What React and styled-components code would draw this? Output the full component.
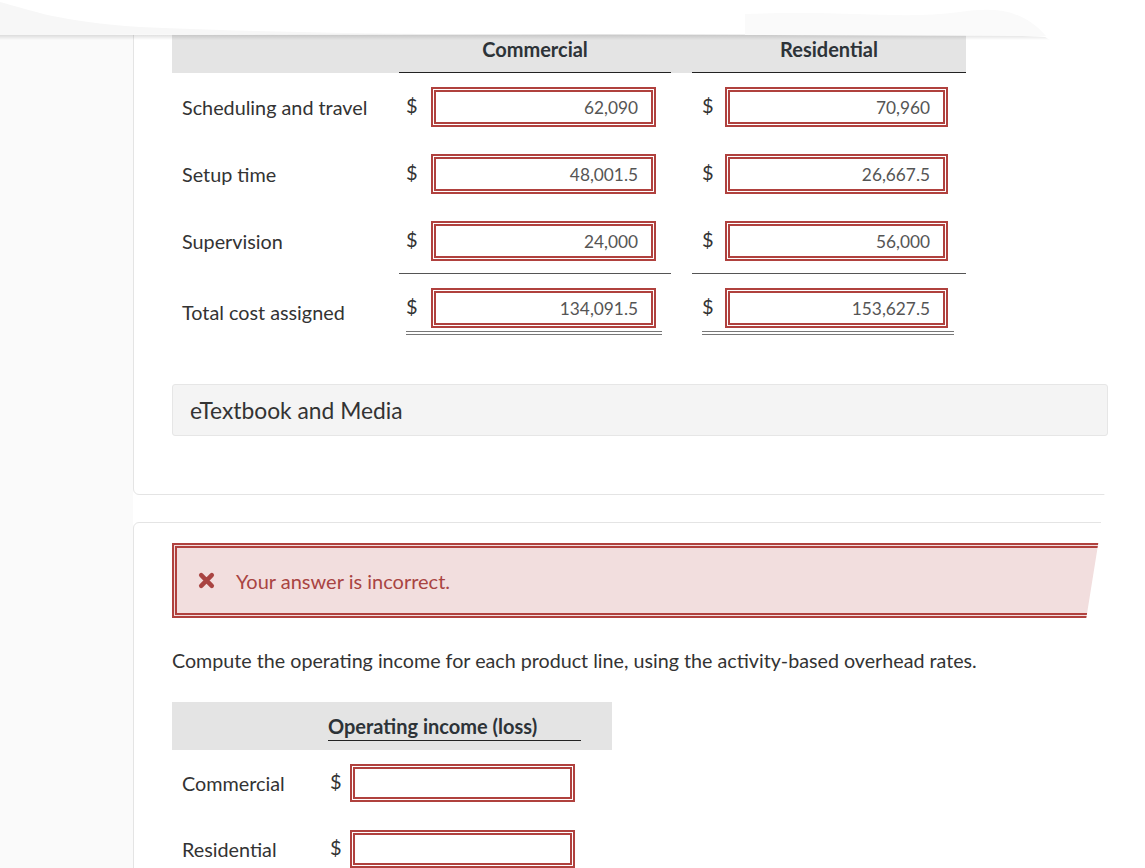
import React from 'react';
import styled, {createGlobalStyle} from 'styled-components';

const GlobalStyle = createGlobalStyle`
    body {
        margin: 0;
        background: #fff;
        font-family: Lato, "Open Sans", "Liberation Sans", sans-serif;
        color: #333;
    }
    * {
        box-sizing: border-box;
    }
`;

const Page = styled.div`
    position: relative;
    display: flex;
    width: 1145px;
    height: 868px;
    overflow: hidden;
`;

const Gutter = styled.div`
    width: 133px;
    flex: none;
    background: #fafafa;
`;

const Main = styled.div`
    flex: 1;
    display: flex;
    flex-direction: column;
    padding-right: 20px;
`;

const Card = styled.section`
    border: 1px solid #e4e4e4;
    border-radius: 6px;
    padding: ${props => props.$top}px 16px ${props => props.$bottom}px 38px;
    margin-top: ${props => props.$gap || 0}px;
    background: #fff;
`;

const Grid = styled.div`
    display: grid;
    grid-template-columns: ${props => props.$cols};
    column-gap: ${props => props.$gap || 0}px;
    width: ${props => props.$width}px;
    margin-top: ${props => props.$mt || 0}px;
    align-items: center;
`;

const HeadRow = styled(Grid)`
    background: #e4e4e4;
    height: 48px;
    align-items: stretch;
`;

const HeadCell = styled.div`
    display: flex;
    align-items: center;
    justify-content: ${props => props.$inset ? 'flex-start' : 'center'};
    font-size: 20px;
    font-weight: 700;
    color: #2d3338;
    border-bottom: ${props => props.$line ? '1.5px solid #222' : 'none'};
    ${props => props.$inset && `
        align-self: end;
        height: 30px;
        margin-bottom: 9px;
    `}
`;

const Label = styled.div`
    padding-left: 10px;
    font-size: 19.8px;
    color: #333;
`;

const Value = styled.div`
    display: flex;
    padding-left: ${props => props.$pad}px;
`;

const Amount = styled.div`
    display: flex;
    align-items: center;
    padding-bottom: ${props => props.$total ? 3 : 0}px;
    padding-right: ${props => props.$total ? 6 : 0}px;
    border-bottom: ${props => props.$total ? '4px double #777' : 'none'};
`;

const Dollar = styled.span`
    width: ${props => props.$w}px;
    font-size: 20px;
    line-height: 26px;
    margin-top: -4px;
    color: #333;
`;

const Field = styled.div`
    width: ${props => props.$w}px;
    height: ${props => props.$h}px;
    border: 5px double #b0413e;
    background: #fff;
    display: flex;
    align-items: center;
    justify-content: flex-end;
    padding-right: 13px;
    font-size: 17.3px;
    color: #555;
`;

const Rule = styled.div`
    border-top: 1.5px solid #555;
`;

const MediaBox = styled.div`
    margin-top: 49px;
    height: 52px;
    background: #f4f4f4;
    border: 1px solid #e6e6e6;
    border-radius: 3px;
    display: flex;
    align-items: center;
    padding-left: 17px;
    font-size: 22.8px;
    color: #333;
`;

const Feedback = styled.div`
    height: 75px;
    background: #f2dede;
    border: 5px double #b0413e;
    display: flex;
    align-items: center;
    gap: 21px;
    padding-left: 21px;
    font-size: 20px;
    color: #a94442;
`;

const Question = styled.p`
    margin: 30px 0 0;
    font-size: 19.7px;
    line-height: 26px;
    color: #333;
`;

const Torn = styled.svg`
    position: absolute;
    top: 0;
    left: 0;
    pointer-events: none;
`;

const costs = [
    {label: 'Scheduling and travel', c: '62,090', r: '70,960'},
    {label: 'Setup time', c: '48,001.5', r: '26,667.5'},
    {label: 'Supervision', c: '24,000', r: '56,000'},
];

const COLS = '206px 272px 274px';

const CostRow = ({label, c, r, total, mt}) => (
    <Grid $cols={COLS} $gap={21} $width={794} $mt={mt}>
        <Label>{label}</Label>
        <Value $pad={7}>
            <Amount $total={total}>
                <Dollar $w={25}>$</Dollar>
                <Field $w={225} $h={40}>{c}</Field>
            </Amount>
        </Value>
        <Value $pad={10}>
            <Amount $total={total}>
                <Dollar $w={23}>$</Dollar>
                <Field $w={223} $h={40}>{r}</Field>
            </Amount>
        </Value>
    </Grid>
);

const XIcon = () => (
    <svg width="17" height="17" viewBox="0 0 16 16">
        <path d="M3 3 L13 13 M13 3 L3 13" stroke="#a94442" strokeWidth="4.2" strokeLinecap="round"/>
    </svg>
);

const TornEdges = () => (
    <Torn width="1145" height="868" viewBox="0 0 1145 868">
        <defs>
            <linearGradient id="shade" x1="0" y1="0" x2="0" y2="1">
                <stop offset="0" stopColor="#000" stopOpacity="0.12"/>
                <stop offset="1" stopColor="#000" stopOpacity="0"/>
            </linearGradient>
        </defs>
        <rect x="0" y="35" width="1060" height="5" fill="url(#shade)"/>
        <path d="M0,0 H1145 V60 L1060,46 L1045,37 L1000,35 L600,34 L0,35 Z" fill="#fff"/>
        <path d="M0,2 C30,10 60,22 140,27 C250,32 350,33 420,34 L0,35 Z" fill="#f7f7f7"/>
        <path d="M745,14 C850,10 900,20 960,12 C1000,6 1025,12 1046,36 L745,35 Z" fill="#fafafa"/>
        <path d="M1030,0 H1145 V868 H1075 L1086,620 L1098,545 L1104,500 L1108,440 L1110,383 L1106,300 L1062,48 Z" fill="#fff"/>
    </Torn>
);

const App = () => (
    <Page>
        <GlobalStyle/>
        <Gutter/>
        <Main>
            <Card $top={24} $bottom={58}>
                <HeadRow $cols={COLS} $gap={21} $width={794}>
                    <div/>
                    <HeadCell $line>Commercial</HeadCell>
                    <HeadCell $line>Residential</HeadCell>
                </HeadRow>
                {costs.map((row, i) => (
                    <CostRow key={row.label} {...row} mt={i === 0 ? 14 : 27}/>
                ))}
                <Grid $cols={COLS} $gap={21} $width={794} $mt={12}>
                    <div/>
                    <Rule/>
                    <Rule/>
                </Grid>
                <CostRow label="Total cost assigned" c="134,091.5" r="153,627.5" total mt={14}/>
                <MediaBox>eTextbook and Media</MediaBox>
            </Card>
            <Card $top={20} $bottom={40} $gap={27}>
                <Feedback>
                    <XIcon/>
                    <span>Your answer is incorrect.</span>
                </Feedback>
                <Question>
                    Compute the operating income for each product line, using the activity-based overhead rates.
                </Question>
                <HeadRow $cols="156px 253px" $width={440} $mt={28}>
                    <div/>
                    <HeadCell $line $inset>Operating income (loss)</HeadCell>
                </HeadRow>
                {['Commercial', 'Residential'].map((name, i) => (
                    <Grid key={name} $cols="156px 253px" $width={440} $mt={i === 0 ? 14 : 28}>
                        <Label>{name}</Label>
                        <Value $pad={2}>
                            <Amount>
                                <Dollar $w={20}>$</Dollar>
                                <Field $w={225} $h={38}/>
                            </Amount>
                        </Value>
                    </Grid>
                ))}
            </Card>
        </Main>
        <TornEdges/>
    </Page>
);

export default App;
